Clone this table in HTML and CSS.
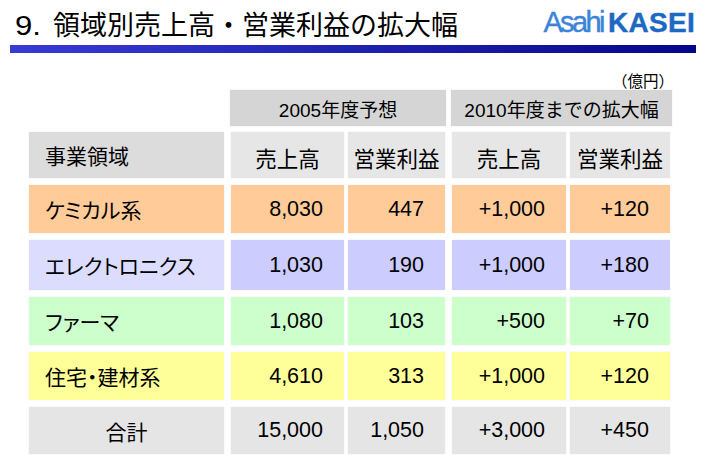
FILE: index.html
```html
<!DOCTYPE html>
<html lang="ja">
<head>
<meta charset="utf-8">
<title>領域別売上高・営業利益の拡大幅</title>
<link rel="stylesheet" href="styles.css">
</head>
<body>
<header class="top">
  <h1 class="title"><span class="num-mark">9.</span> 領域別売上高・営業利益の拡大幅</h1>
  <div class="logo"><span class="asahi">Asahi</span><span class="kasei">KASEI</span></div>
</header>
<div class="rule"></div>
<main class="content">
  <div class="unit">（億円）</div>
  <div class="grid">
    <div class="cell group g1">2005年度予想</div>
    <div class="cell group g2">2010年度までの拡大幅</div>

    <div class="cell head-label">事業領域</div>
    <div class="cell colhead c2">売上高</div>
    <div class="cell colhead">営業利益</div>
    <div class="cell colhead c4">売上高</div>
    <div class="cell colhead">営業利益</div>

    <div class="cell label chem">ケミカル系</div>
    <div class="cell num chem c2">8,030</div>
    <div class="cell num chem">447</div>
    <div class="cell num chem c4">+1,000</div>
    <div class="cell num chem">+120</div>

    <div class="cell label elec-l">エレクトロニクス</div>
    <div class="cell num elec c2">1,030</div>
    <div class="cell num elec">190</div>
    <div class="cell num elec c4">+1,000</div>
    <div class="cell num elec">+180</div>

    <div class="cell label pharma">ファーマ</div>
    <div class="cell num pharma c2">1,080</div>
    <div class="cell num pharma">103</div>
    <div class="cell num pharma c4">+500</div>
    <div class="cell num pharma">+70</div>

    <div class="cell label house">住宅・建材系</div>
    <div class="cell num house c2">4,610</div>
    <div class="cell num house">313</div>
    <div class="cell num house c4">+1,000</div>
    <div class="cell num house">+120</div>

    <div class="cell total-label total">合計</div>
    <div class="cell num total c2">15,000</div>
    <div class="cell num total">1,050</div>
    <div class="cell num total c4">+3,000</div>
    <div class="cell num total">+450</div>
  </div>
</main>
</body>
</html>
```
FILE: styles.css
```css
html, body {
  margin: 0;
  padding: 0;
  background: #ffffff;
}
body {
  width: 701px;
  height: 469px;
  overflow: hidden;
  font-family: "Liberation Sans", "Noto Sans CJK JP", sans-serif;
  color: #000;
}
.top {
  display: flex;
  justify-content: space-between;
  align-items: flex-end;
  height: 45px;
  padding: 0 6px 0 15px;
  box-sizing: border-box;
}
.title {
  margin: 0;
  font-size: 27px;
  font-weight: normal;
  line-height: 37px;
  white-space: nowrap;
}
.num-mark {
  display: inline-block;
  transform: scaleX(1.15);
  transform-origin: left center;
  margin-right: 8px;
}
.logo {
  align-self: flex-start;
  margin-top: 6px;
  font-size: 28px;
  line-height: 32px;
  white-space: nowrap;
}
.asahi {
  color: #3a84d9;
  font-size: 29px;
  letter-spacing: -2.6px;
  margin-right: 5px;
  -webkit-text-stroke: 0.4px #3a84d9;
}
.kasei {
  color: #1c69c3;
  font-weight: bold;
  letter-spacing: 0.3px;
  -webkit-text-stroke: 0.4px #1c69c3;
}
.rule {
  margin-left: 10px;
  width: 686px;
  height: 8px;
  background: linear-gradient(to right, #3a3ad4, #2424b4 45%, #06068a);
}
.content {
  padding-left: 29px;
}
.unit {
  width: 645px;
  height: 37px;
  display: flex;
  justify-content: flex-end;
  align-items: flex-end;
  font-size: 15.5px;
  line-height: 19px;
  font-family: "Noto Sans CJK JP", sans-serif;
}
.grid {
  display: grid;
  grid-template-columns: 195px 116px 97px 117px 100px;
  grid-template-rows: 35px 46px 48px 50px 48px 48px 47px;
  column-gap: 4px;
  row-gap: 7px;
}
.cell {
  display: flex;
  align-items: center;
  box-sizing: border-box;
  white-space: nowrap;
  box-shadow: 0 0 1px rgba(0, 0, 0, 0.12);
}
.c2, .c4 {
  margin-left: 3px;
}
.group {
  justify-content: center;
  background: #d5d5d5;
  font-size: 19px;
  height: 36px;
}
.g1 {
  grid-column: 2 / 4;
  margin-left: 2px;
  margin-right: -1px;
}
.g2 {
  grid-column: 4 / 6;
  margin-left: 2px;
  margin-right: -2px;
}
.head-label {
  grid-column: 1;
  background: #dcdcdc;
  font-size: 21px;
  padding-left: 16px;
}
.colhead {
  justify-content: center;
  background: #e6e6e6;
  font-size: 21.5px;
  padding-top: 4px;
}
.label {
  font-size: 21px;
  padding-left: 16px;
  font-feature-settings: "palt";
}
.total-label {
  justify-content: center;
  font-size: 21px;
}
.num {
  justify-content: flex-end;
  font-size: 21.5px;
  padding-right: 21px;
}
.chem { background: #ffcc99; }
.elec-l { background: #dcdcff; }
.elec { background: #ccccff; }
.pharma { background: #ccffcc; }
.house { background: #ffff99; }
.total { background: #e5e5e5; }
```
